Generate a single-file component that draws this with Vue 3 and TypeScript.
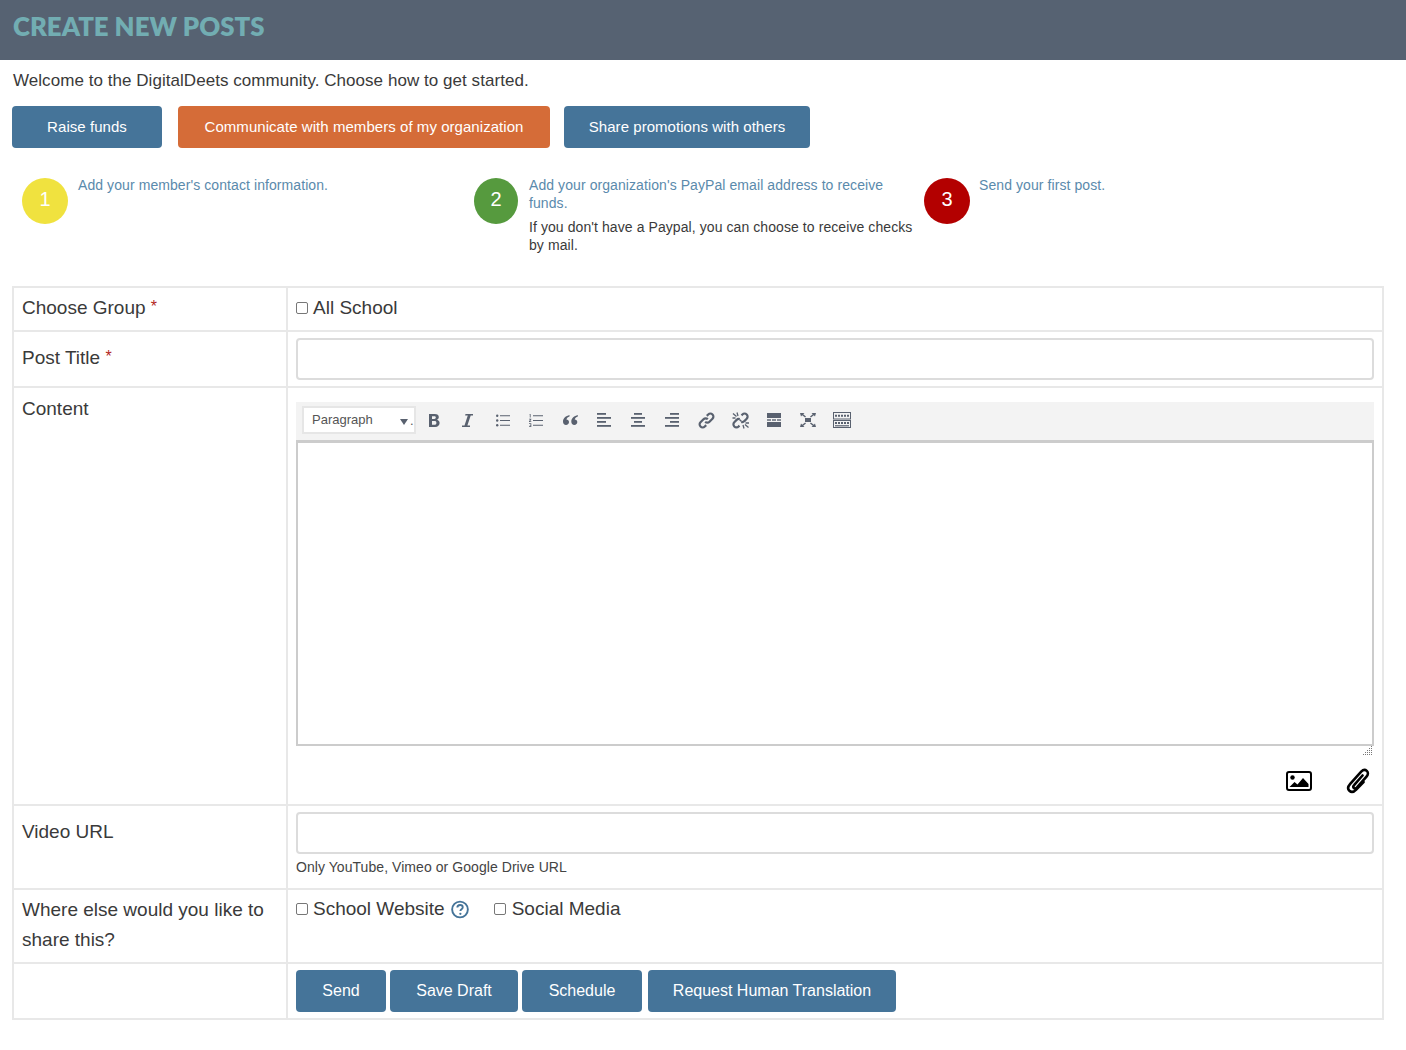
<script setup lang="ts">
const alignLines: Record<string, number[][]> = {
  left: [[0, 9], [0, 14], [0, 9], [0, 14]],
  center: [[3, 11], [0, 14], [3, 11], [0, 14]],
  right: [[5, 14], [0, 14], [5, 14], [0, 14]],
}
</script>

<template>
  <div class="page">
    <header class="top"><h1>CREATE NEW POSTS</h1></header>
    <p class="welcome">Welcome to the DigitalDeets community. Choose how to get started.</p>
    <div class="choices">
      <button class="btn blue raise">Raise funds</button>
      <button class="btn orange comm">Communicate with members of my organization</button>
      <button class="btn blue share">Share promotions with others</button>
    </div>
    <div class="steps">
      <div class="step s1">
        <div class="num yellow">1</div>
        <div class="step-text"><p class="link">Add your member's contact information.</p></div>
      </div>
      <div class="step s2">
        <div class="num green">2</div>
        <div class="step-text">
          <p class="link">Add your organization's PayPal email address to receive funds.</p>
          <p class="note">If you don't have a Paypal, you can choose to receive checks by mail.</p>
        </div>
      </div>
      <div class="step s3">
        <div class="num red">3</div>
        <div class="step-text"><p class="link">Send your first post.</p></div>
      </div>
    </div>

    <table class="form">
      <tbody>
        <tr class="r-group">
          <th>Choose Group <span class="req">*</span></th>
          <td><label class="check"><span class="box"></span>All School</label></td>
        </tr>
        <tr class="r-title">
          <th>Post Title <span class="req">*</span></th>
          <td><input class="field" type="text" /></td>
        </tr>
        <tr class="r-content">
          <th>Content</th>
          <td>
            <div class="toolbar">
              <div class="select"><span>Paragraph</span><i class="arrow"></i><i class="dotmark">.</i></div>
              <svg class="ic b" width="11" height="13" viewBox="0 0 11 13"><path fill-rule="evenodd" d="M0 0h5.800c2.600 0 4 1.100 4 3.100 0 1.300-.7 2.200-1.800 2.700 1.500.4 2.600 1.500 2.600 3.300 0 2.400-1.700 3.900-4.400 3.900H0zM3 2.300v2.600h2.300c1 0 1.500-.4 1.500-1.300s-.5-1.300-1.500-1.300zM3 7.100v3.600h2.600c1.100 0 1.800-.6 1.800-1.800s-.7-1.800-1.800-1.800z"/></svg>
              <svg class="ic i" width="11" height="13" viewBox="0 0 11 13"><path d="M3.500 0H11v1.500H8.700L5.400 11.500H8V13H0v-1.500h2.500L5.800 1.500H3.100z"/></svg>
              <svg class="ic ul" width="14" height="13" viewBox="0 0 14 13"><circle cx="1.200" cy="1.700" r="1.200"/><circle cx="1.200" cy="6.500" r="1.200"/><circle cx="1.200" cy="11.300" r="1.200"/><path d="M4 1.200h10v1H4zM4 6h10v1H4zM4 10.800h10v1H4z"/></svg>
              <svg class="ic ol" width="14" height="13" viewBox="0 0 14 13"><path d="M.6 0h1v3.500h-.8V.8H.6zM0 4.800h2.300v.8L1 7.200h1.300V8H0v-.7L1.400 5.600H0zM0 9.200h2.300V13H0v-.7h1.500v-.8H.6v-.6h.9v-1H0z"/><path d="M4 1.200h10v1H4zM4 6h10v1H4zM4 10.800h10v1H4z"/></svg>
              <svg class="ic q" width="15" height="10" viewBox="0 0 15 10"><path d="M6.500 0C3 .8 0 3.300 0 6.500 0 8.500 1.200 10 3 10s3-1.300 3-2.900-1.100-2.700-2.600-2.700c.4-1.300 1.600-2.300 3.100-2.800zM14.800 0c-3.500.8-6.500 3.300-6.500 6.500 0 2 1.200 3.500 3 3.500s3-1.300 3-2.900-1.100-2.700-2.600-2.700c.4-1.300 1.600-2.300 3.100-2.800z"/></svg>
              <svg v-for="(lines, name) in alignLines" :key="name" class="ic al" :class="name" width="14" height="14" viewBox="0 0 14 14">
                <rect v-for="(l, n) in lines" :key="n" :x="l[0]" :y="n * 4" :width="l[1] - l[0]" height="1.800" />
              </svg>
              <svg class="ic lnk" width="17" height="17" viewBox="0 0 17 17" stroke="#59616f" stroke-width="2.200"><path d="M7.200 9.800a3 3 0 0 0 4.300 0l3-3a3 3 0 0 0-4.300-4.300L8.800 3.900"/><path d="M9.800 7.200a3 3 0 0 0-4.300 0l-3 3a3 3 0 0 0 4.300 4.300l1.400-1.400"/></svg>
              <svg class="ic unl" width="17" height="17" viewBox="0 0 17 17" stroke="#59616f" stroke-width="2.200"><path d="M9.500 3.400l.9-.9a3 3 0 0 1 4.300 4.300l-2.300 2.300a3 3 0 0 1-3.100.8"/><path d="M7.500 13.600l-.9.9a3 3 0 0 1-4.300-4.300l2.300-2.300a3 3 0 0 1 3.100-.8"/><path stroke-width="1.300" d="M1 1.500l3.500 3M5 .5l1 3.500M.5 6h3M7.500 7.500l2 2M13 12.500l3.500 3M11 13l1 3.500M13.500 11H17"/></svg>
              <svg class="ic hr" width="14" height="14" viewBox="0 0 14 14"><rect width="14" height="5"/><rect y="9" width="14" height="5"/><rect y="6.300" width="4" height="1.400"/><rect x="5" y="6.300" width="4" height="1.400"/><rect x="10" y="6.300" width="4" height="1.400"/></svg>
              <svg class="ic fs" width="16" height="14" viewBox="0 0 16 14"><rect x="5" y="5" width="6" height="4"/><path d="M0 0h4.500L3.200 1.200l2.800 2.200-.9 1-2.900-2.200L1 3.500zM16 0h-4.500l1.300 1.200-2.800 2.200.9 1 2.900-2.200L15 3.500zM0 14h4.500l-1.300-1.200 2.800-2.200-.9-1-2.900 2.200L1 10.500zM16 14h-4.500l1.300-1.200-2.800-2.200.9-1 2.900 2.200 1.200-1.300z"/></svg>
              <svg class="ic kb" width="18" height="16" viewBox="0 0 18 16" stroke="#59616f"><rect x=".5" y=".5" width="17" height="6.500"/><rect x=".5" y="8.500" width="17" height="7"/><path stroke-dasharray="2 1" stroke-width="2" d="M2 3.800h14M2 11h14"/><path stroke-width="1.200" d="M2 13.800h14"/></svg>
            </div>
            <div class="editor"></div>
            <div class="grip">
              <svg width="10" height="10" viewBox="0 0 10 10" fill="#777"><rect x="8" y="0" width="1" height="1"/><rect x="6" y="2" width="1" height="1"/><rect x="8" y="2" width="1" height="1"/><rect x="4" y="4" width="1" height="1"/><rect x="6" y="4" width="1" height="1"/><rect x="8" y="4" width="1" height="1"/><rect x="2" y="6" width="1" height="1"/><rect x="4" y="6" width="1" height="1"/><rect x="6" y="6" width="1" height="1"/><rect x="8" y="6" width="1" height="1"/><rect x="0" y="8" width="1" height="1"/><rect x="2" y="8" width="1" height="1"/><rect x="4" y="8" width="1" height="1"/><rect x="6" y="8" width="1" height="1"/><rect x="8" y="8" width="1" height="1"/></svg>
            </div>
            <div class="attach">
              <svg width="26" height="20" viewBox="0 0 26 20"><rect x="1" y="1" width="24" height="18" rx="2" fill="none" stroke="#000" stroke-width="2"/><circle cx="6.500" cy="6.500" r="2.200"/><path d="M3.500 16l5-5 3 2.500L17 7l5.500 6v3z"/></svg>
              <svg class="clip" width="24" height="26" viewBox="0 0 24 26" fill="none" stroke="#000" stroke-width="2.600" stroke-linecap="round"><path d="M16.500 7.500L8.300 16.800c-1.200 1.300-1.200 2.500-.5 3.200.7.700 2 .6 3.200-.6L20.500 8.600c1.700-1.900 1.800-4.300.3-5.700-1.500-1.400-3.800-1.200-5.600.7L4.200 15.800c-2.300 2.600-2.500 5.400-.8 7 1.800 1.700 4.500 1.200 6.800-1.200L17.500 14"/></svg>
            </div>
          </td>
        </tr>
        <tr class="r-video">
          <th>Video URL</th>
          <td>
            <input class="field" type="text" />
            <p class="hint">Only YouTube, Vimeo or Google Drive URL</p>
          </td>
        </tr>
        <tr class="r-share">
          <th>Where else would you like to share this?</th>
          <td>
            <div class="share-opts">
              <label class="check"><span class="box"></span>School Website</label>
              <svg class="help" width="18" height="19" viewBox="0 0 19 19"><circle cx="9.500" cy="9.500" r="8.300" fill="none" stroke="#457499" stroke-width="2"/><path d="M6.700 7.500c0-1.700 1.300-2.800 2.900-2.800s2.800 1 2.800 2.400c0 2.200-2.500 2.100-2.500 4" fill="none" stroke="#457499" stroke-width="2"/><circle cx="9.900" cy="14.100" r="1.200" fill="#457499"/></svg>
              <label class="check social"><span class="box"></span>Social Media</label>
            </div>
          </td>
        </tr>
        <tr class="r-actions">
          <th></th>
          <td>
            <div class="actions">
              <button class="btn blue send">Send</button>
              <button class="btn blue draft">Save Draft</button>
              <button class="btn blue sched">Schedule</button>
              <button class="btn blue human">Request Human Translation</button>
            </div>
          </td>
        </tr>
      </tbody>
    </table>
  </div>
</template>

<style>
html, body { margin: 0; background: #fff; }
</style>

<style scoped>
.page {
  font-family: "Liberation Sans", Arial, sans-serif;
  color: #333;
  height: 1050px;
  overflow: hidden;
}
p, h1 { margin: 0; }
.top {
  height: 60px;
  background: #566272;
  display: flex;
  align-items: center;
  padding-left: 13px;
  padding-bottom: 6px;
  box-sizing: border-box;
}
h1 {
  font-family: Lato, sans-serif;
  font-size: 25.8px;
  font-weight: 800;
  color: #72adb2;
  line-height: 1;
}
.welcome {
  font-size: 17px;
  letter-spacing: .05px;
  line-height: 20px;
  margin: 11px 0 15px 12px;
  padding-left: 1px;
  color: #3a3a3a;
}
.choices {
  display: flex;
  padding-left: 12px;
}
.btn {
  height: 42px;
  border: 0;
  border-radius: 4px;
  color: #fff;
  font-family: inherit;
  font-size: 16px;
  padding: 0;
}
.choices .btn { font-size: 15px; letter-spacing: .05px; padding-bottom: 2px; }
.blue { background: #457499; }
.orange { background: #d56c38; }
.raise { width: 150px; margin-right: 16px; }
.comm { width: 372px; margin-right: 14px; }
.share { width: 246px; }
.steps {
  display: flex;
  padding-left: 22px;
  margin-top: 30px;
  height: 108px;
}
.step { display: flex; align-items: flex-start; }
.s1 { width: 452px; }
.s2 { width: 450px; }
.num {
  flex: none;
  width: 46px;
  height: 46px;
  border-radius: 50%;
  color: #fff;
  font-size: 20px;
  line-height: 42px;
  text-align: center;
  margin-right: 10px;
}
.s2 .num { width: 44px; margin-right: 11px; }
.s3 .num { margin-right: 9px; }
.yellow { background: #f0e23f; }
.green { background: #569a3e; }
.red { background: #b30000; }
.step-text { font-size: 14px; line-height: 18px; letter-spacing: .08px; }
.s2 .step-text { width: 386px; }
.link { color: #5a8aac; margin-top: -2px; }
.note { margin-top: 6px; color: #3a3a3a; }
.form {
  width: 1372px;
  margin-left: 12px;
  border-collapse: collapse;
  table-layout: fixed;
}
.form th, .form td {
  border: 2px solid #e8e8e8;
  vertical-align: top;
  box-sizing: border-box;
  font-size: 19px;
  font-weight: 400;
  line-height: 30px;
  text-align: left;
  color: #3a3a3a;
}
.form th { width: 274px; padding: 6px 8px; }
.form td { padding: 6px 8px; }
.r-group { height: 44px; }
.r-title { height: 56px; }
.r-content { height: 418px; }
.r-video { height: 84px; }
.r-share { height: 74px; }
.r-actions { height: 56px; }
.r-group th { padding-top: 4px; }
.r-group td { padding-top: 5px; }
.r-title th { padding-top: 10px; }
.r-content th { padding-top: 6px; }
.r-video th { padding-top: 11px; }
.r-share th { padding-top: 5px; }
.r-share td { padding-top: 4px; }
.req { color: #b3261e; font-size: 16px; vertical-align: 2px; }
.check { display: inline-flex; align-items: center; }
.box {
  width: 10px;
  height: 10px;
  border: 1px solid #777;
  border-radius: 2px;
  background: #fff;
  margin-right: 5px;
}
.field {
  display: block;
  width: 100%;
  height: 42px;
  box-sizing: border-box;
  border: 2px solid #dcdcdc;
  border-radius: 4px;
  background: #fff;
}
.toolbar {
  display: flex;
  align-items: center;
  height: 38px;
  box-sizing: border-box;
  background: #f3f3f3;
  margin-top: 8px;
  padding: 0 0 2px 6px;
  position: relative;
}
.select {
  width: 114px;
  height: 28px;
  box-sizing: border-box;
  background: #fff;
  border: 2px solid #e6e6e6;
  font-size: 13px;
  line-height: 24px;
  padding-left: 8px;
  position: relative;
  color: #555;
}
.arrow {
  position: absolute;
  left: 96px;
  top: 11px;
  border-left: 4px solid transparent;
  border-right: 4px solid transparent;
  border-top: 6px solid #59616f;
}
.dotmark {
  position: absolute;
  left: 106px;
  top: 1px;
  font-style: normal;
}
.ic { fill: #59616f; flex: none; }
.lnk, .unl, .kb { fill: none; }
.b { margin-left: 13px; }
.i { margin-left: 22px; }
.ul { margin-left: 23px; }
.ol { margin-left: 19px; }
.q { margin-left: 20px; }
.left { margin-left: 19px; }
.center { margin-left: 20px; }
.right { margin-left: 20px; }
.lnk { margin-left: 19px; }
.unl { margin-left: 17px; }
.hr { margin-left: 18px; }
.fs { margin-left: 19px; }
.kb { margin-left: 17px; }
.editor {
  height: 301px;
  border: 2px solid #ccc;
  border-top-width: 3px;
  background: #fff;
}
.grip { height: 10px; display: flex; justify-content: flex-end; line-height: 0; padding-right: 1px; }
.attach {
  display: flex;
  justify-content: flex-end;
  align-items: center;
  gap: 34px;
  height: 26px;
  margin-top: 12px;
  padding-right: 4px;
}
.hint { font-size: 14px; letter-spacing: .06px; line-height: 20px; margin-top: 3px; color: #444; }
.share-opts { display: flex; align-items: center; }
.help { margin-left: 6px; }
.social { margin-left: 25px; }
.social .box { margin-right: 6px; }
.actions { display: flex; gap: 4px; }
.send { width: 90px; }
.draft { width: 128px; }
.sched { width: 120px; margin-right: 2px; }
.human { width: 248px; }
</style>
